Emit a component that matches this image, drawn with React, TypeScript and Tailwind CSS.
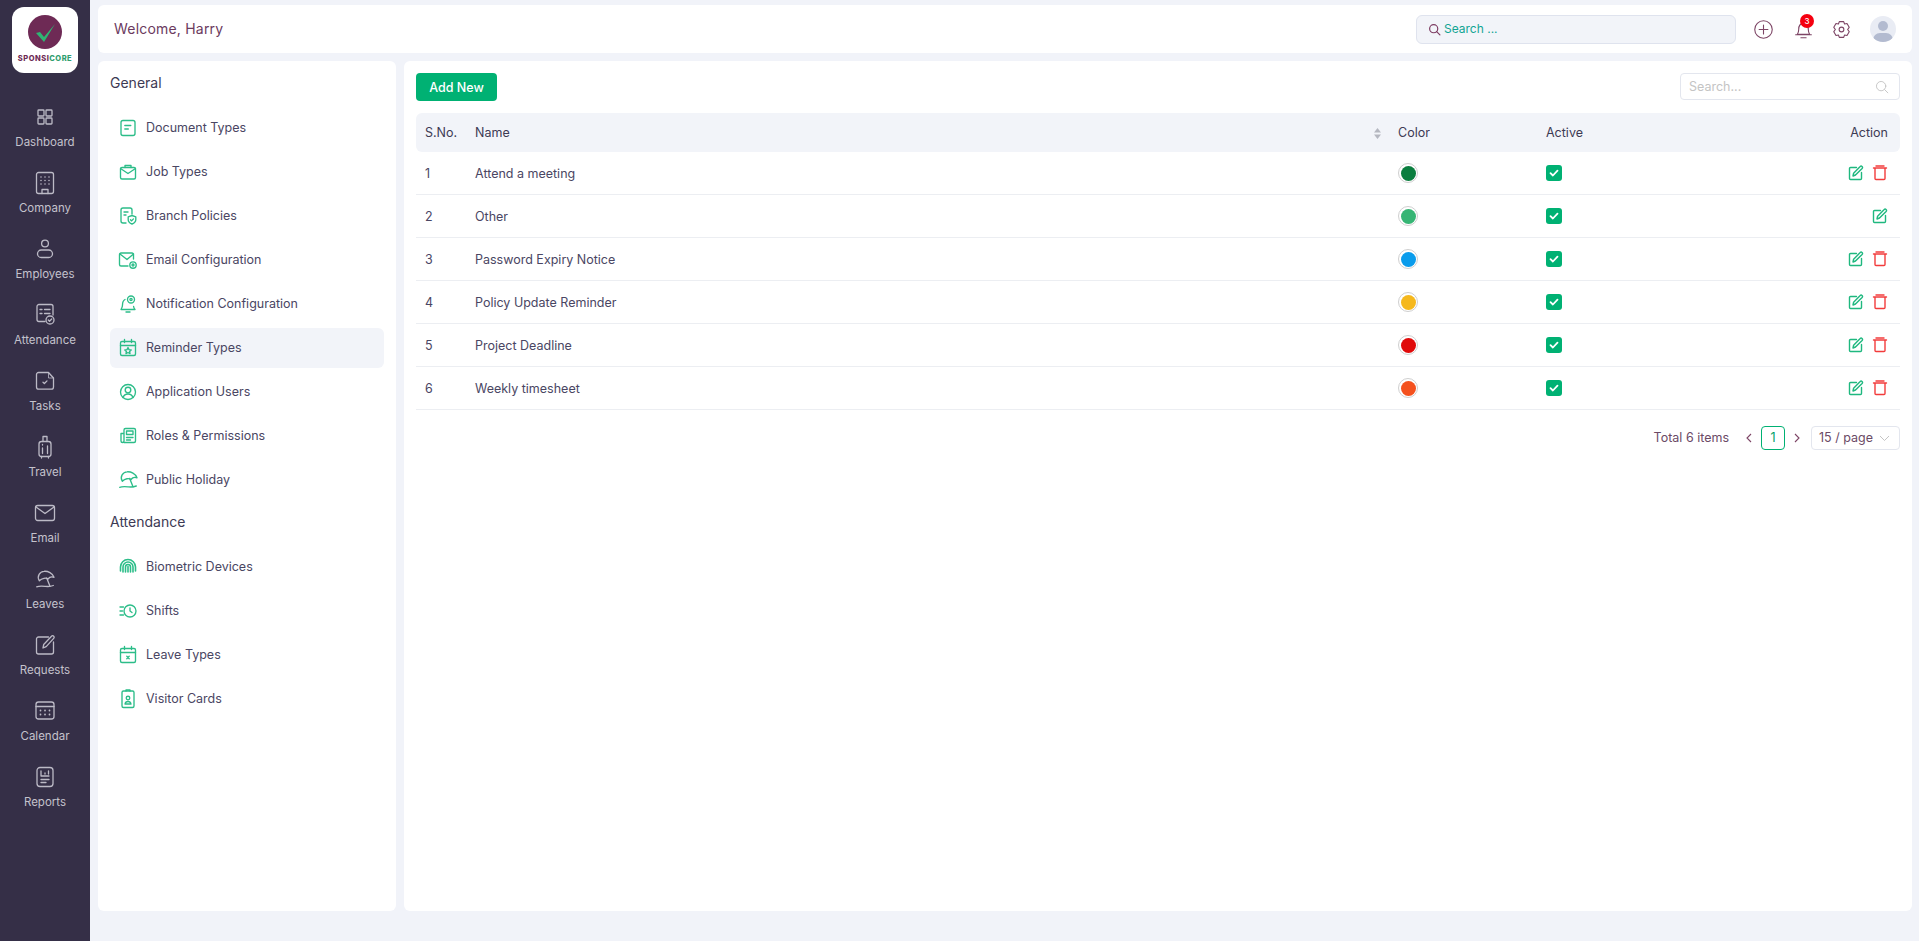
import React from 'react'

type IconProps = { children: React.ReactNode; className?: string; size?: number; box?: number; sw?: number }

const Icon = ({ children, className, size = 24, box = 24, sw = 1.3 }: IconProps) => (
  <svg width={size} height={size} viewBox={`0 0 ${box} ${box}`} fill="none" stroke="currentColor" strokeWidth={sw} strokeLinecap="round" strokeLinejoin="round" className={className}>
    {children}
  </svg>
)

const umbrella = (
  <>
    <path d="M6.3 13.7C3.500 9 7 4.500 11 4.300c4-.3 8.500 1.700 10 6-2.500-.8-4.500-.3-6 1.700-2-1.500-6-1-8.700 1.700Z" />
    <path d="M13.700 11l3.300 8.300" />
    <path d="M3.700 19.800c3.300-1.300 8.300-.3 11.300-.3 2 0 4-.5 5.300-1" />
  </>
)

const navItems: { label: string; icon: React.ReactNode }[] = [
  { label: 'Dashboard', icon: <><rect x="5" y="5" width="6" height="6" rx="0.8" /><rect x="13" y="5" width="6" height="6" rx="0.8" /><rect x="5" y="13" width="6" height="6" rx="0.8" /><rect x="13" y="13" width="6" height="6" rx="0.8" /></> },
  { label: 'Company', icon: <><rect x="3.500" y="1.500" width="17" height="21" rx="2" /><path d="M9 22.500v-4h6v4" /><path d="M8 6h.01M12 6h.01M16 6h.01M8 9.500h.01M12 9.500h.01M16 9.500h.01M8 13h.01M12 13h.01M16 13h.01" strokeWidth="1.600" /></> },
  { label: 'Employees', icon: <><circle cx="12" cy="6.500" r="3.400" /><rect x="4.500" y="13" width="15" height="7.500" rx="3.750" /></> },
  { label: 'Attendance', icon: <><path d="M12 18.500H6a2 2 0 0 1-2-2V3.500a2 2 0 0 1 2-2h12a2 2 0 0 1 2 2V12" /><path d="M7 6.500h2M11.500 6.500H17M7 10.500h2M11.500 10.500H17" /><circle cx="17" cy="17" r="4" /><path d="M15.300 17l1.200 1.200 2.200-2.200" /></> },
  { label: 'Tasks', icon: <><path d="M5.500 3.500h10l5 5.500v9a2.200 2.200 0 0 1-2.200 2.200H5.700A2.200 2.200 0 0 1 3.500 18V5.500a2 2 0 0 1 2-2Z" /><path d="M15.500 3.500V9h5" strokeWidth="0.800" /><path d="M10 13.200l1.400 1.300 2.600-2.600" /></> },
  { label: 'Travel', icon: <><rect x="6" y="6.500" width="12" height="15" rx="2.500" /><path d="M10 6.500V1.500h4v5M8.500 21.500v1.500M15.500 21.500v1.500" /><path d="M9.500 13v5.500M14.500 11v7.500M9.500 9.500v.5" /></> },
  { label: 'Email', icon: <><rect x="2.500" y="4.500" width="19" height="15" rx="2.200" /><path d="M3 6l9 6.500L21 6" /></> },
  { label: 'Leaves', icon: umbrella },
  { label: 'Requests', icon: <><path d="M15.500 4H5.500a2 2 0 0 0-2 2v13a2 2 0 0 0 2 2h13a2 2 0 0 0 2-2V9" /><path d="M10 15l.7-3.500L18.500 3.200a1.200 1.200 0 0 1 2.200 2.200l-7.500 8.200Z" /></> },
  { label: 'Calendar', icon: <><rect x="3" y="3" width="18" height="17" rx="2.500" /><path d="M3 7.500h18" /><path d="M7.500 11.500h.01M12 11.500h.01M16.500 11.500h.01M7.500 15.500h.01M12 15.500h.01M16.500 15.500h.01" strokeWidth="1.800" /></> },
  { label: 'Reports', icon: <><path d="M7 2.500h10a3 3 0 0 1 3 3v13a3 3 0 0 1-3 3H7a3 3 0 0 1-3-3v-13a3 3 0 0 1 3-3Z" /><path d="M8 6v5h8M12 8v1M15.500 6v3M8 14.500h8M8 17.500h5" /></> },
]

const generalItems: { label: string; icon: React.ReactNode }[] = [
  { label: 'Document Types', icon: <><rect x="3" y="2.500" width="14" height="15" rx="2" /><path d="M6.800 7.500h6M6.800 11h3.500" /></> },
  { label: 'Job Types', icon: <><rect x="2.500" y="5.500" width="15" height="11.500" rx="1.500" /><path d="M7 5.500V3.500h6v2M2.500 6.500l7.500 5 7.500-5" /></> },
  { label: 'Branch Policies', icon: <><path d="M8 17H5a2 2 0 0 1-2-2V4a2 2 0 0 1 2-2h7a2 2 0 0 1 2 2v4" /><path d="M6 6h4M6 9h2" /><path d="M14 9.500l3.800 1.300v3c0 2-1.600 3.400-3.800 4.200-2.200-.8-3.800-2.200-3.800-4.200v-3Z" /><path d="M12.500 13.800l1.100 1.100 1.900-2" /></> },
  { label: 'Email Configuration', icon: <><path d="M10 16H3a1.500 1.500 0 0 1-1.500-1.500v-10A1.500 1.500 0 0 1 3 3h11a1.500 1.500 0 0 1 1.500 1.500V9" /><path d="M2 4l7 5.500L15.500 4" /><circle cx="15" cy="15" r="3.200" /><circle cx="15" cy="15" r="1" /></> },
  { label: 'Notification Configuration', icon: <><path d="M7 5.500C5 6.500 4.500 8.500 4.500 11c0 2-.5 3-1.500 4.500h14c-.8-1-1.200-1.800-1.400-3" /><path d="M8 18h4" /><circle cx="13" cy="5.500" r="3.500" /><circle cx="13" cy="5.500" r="1.100" /></> },
  { label: 'Reminder Types', icon: <><rect x="2.500" y="3.500" width="15" height="14" rx="1.500" /><path d="M2.500 7.500h15M6.500 1.500v3M13.500 1.500v3" /><path d="M10 9.500l1 2.100 2.200.3-1.600 1.500.4 2.200-2-1.100-2 1.100.4-2.200-1.600-1.500 2.200-.3Z" /></> },
  { label: 'Application Users', icon: <><circle cx="10" cy="10" r="7.500" /><circle cx="10" cy="8" r="2.800" /><path d="M5 15.500c.8-2.200 2.600-3.500 5-3.500s4.200 1.300 5 3.500" /></> },
  { label: 'Roles & Permissions', icon: <><path d="M6 16.500h10a1.500 1.500 0 0 0 1.500-1.500V4A1.500 1.500 0 0 0 16 2.500H7.500A1.500 1.500 0 0 0 6 4v11a1.500 1.500 0 0 1-3 0V7.500h3" /><rect x="8.500" y="5" width="6.500" height="3.500" /><path d="M8.500 11.500h6.500M8.500 14h4" /></> },
  { label: 'Public Holiday', icon: <g transform="translate(-2 -2.500) scale(1)">{umbrella}</g> },
]

const attendanceItems: { label: string; icon: React.ReactNode }[] = [
  { label: 'Biometric Devices', icon: <><path d="M2.500 14V10a7.500 7.500 0 0 1 15 0v4" strokeWidth="1.600" /><path d="M5 15V10a5 5 0 0 1 10 0v5" strokeWidth="1.600" /><path d="M7.500 15V10a2.500 2.500 0 0 1 5 0v5M10 9.500V15" strokeWidth="1.600" /></> },
  { label: 'Shifts', icon: <><circle cx="12" cy="10" r="6" /><path d="M12 6.800V10l2 1.500M2 6h3.500M2 10h2.500M2 14h3.500" /></> },
  { label: 'Leave Types', icon: <><rect x="2.500" y="3.500" width="15" height="14" rx="1.500" /><path d="M2.500 7.500h15M6.500 1.500v3M13.500 1.500v3M8.800 11.300l2.400 2.400M11.200 11.300l-2.400 2.400" /></> },
  { label: 'Visitor Cards', icon: <><rect x="4" y="2" width="12" height="16.500" rx="1.500" /><path d="M8 2V1h4v1" /><circle cx="10" cy="9" r="1.800" /><path d="M7 15c.3-1.600 1.400-2.500 3-2.500s2.700.9 3 2.500Z" /></> },
]

const rows = [
  { no: 1, name: 'Attend a meeting', color: 'bg-[#0a7d3e]', del: true },
  { no: 2, name: 'Other', color: 'bg-[#36b574]', del: false },
  { no: 3, name: 'Password Expiry Notice', color: 'bg-[#0a9cec]', del: true },
  { no: 4, name: 'Policy Update Reminder', color: 'bg-[#f5b81d]', del: true },
  { no: 5, name: 'Project Deadline', color: 'bg-[#e00a0a]', del: true },
  { no: 6, name: 'Weekly timesheet', color: 'bg-[#f4511e]', del: true },
]

const MenuRow = ({ label, icon, active }: { label: string; icon: React.ReactNode; active?: boolean }) => (
  <div className={`flex h-[40px] items-center rounded-md pl-[8px] mb-[4px] ${active ? 'bg-[#f2f4f9]' : ''}`}>
    <span className="flex w-[20px] justify-center text-[#2cbd89]">
      <Icon size={20} box={20} sw={1.350}>{icon}</Icon>
    </span>
    <span className="ml-[8px] text-[12.5px] text-[#4a4663]">{label}</span>
  </div>
)

const App = () => {
  return (
    <div className="flex h-screen overflow-hidden bg-[#f1f3f9] font-[Inter,sans-serif]">
      {/* main nav */}
      <aside className="w-[90px] shrink-0 bg-[#352f47] pt-[7px]">
        <div className="mx-auto flex h-[66px] w-[66px] flex-col items-center rounded-xl bg-white pt-[8px]">
          <div className="flex h-[34px] w-[34px] items-center justify-center rounded-full bg-[#6e2a55]">
            <svg width="34" height="34" viewBox="0 0 34 34">
              <path d="M8 18l4-1 4 5L27 9 16 27Z" fill="#2fb573" />
            </svg>
          </div>
          <div className="mt-[5px] text-[7.500px] font-extrabold leading-[10px] tracking-[0.5px] text-[#6e2a55]">
            SPONSI<span className="text-[#2f9e6e]">CORE</span>
          </div>
        </div>
        <nav className="pt-[32px]">
          {navItems.map((item) => (
            <div key={item.label} className="flex h-[66px] flex-col items-center text-[#c4c2cc]">
              <span className="text-[#bcbac6]"><Icon>{item.icon}</Icon></span>
              <span className="mt-[5px] text-[11.500px] leading-[16px]">{item.label}</span>
            </div>
          ))}
        </nav>
      </aside>

      <div className="flex min-w-0 flex-1 flex-col px-[8px] pt-[5px] pb-[30px] pr-[7px]">
        {/* top bar */}
        <header className="flex h-[48px] shrink-0 items-center rounded-md bg-white pl-[16px]">
          <span className="mb-[2px] text-[14px] tracking-[0.2px] text-[#6b3a5e]">Welcome, Harry</span>
          <div className="ml-auto flex h-[29px] w-[320px] items-center rounded-md border border-[#dfe3ee] bg-[#f2f4f9] pl-[11px]">
            <svg width="13" height="13" viewBox="0 0 24 24" fill="none" stroke="#7d3c62" strokeWidth="2.200" strokeLinecap="round"><circle cx="10.500" cy="10.500" r="7.500" /><path d="M16 16l6 6" /></svg>
            <span className="ml-[3px] text-[12px] text-[#12a594]">Search ...</span>
          </div>
          <div className="ml-[17px] flex items-center text-[#7d4565]">
            <Icon size={21} sw={1.250}><circle cx="12" cy="12" r="10" /><path d="M12 7v10M7 12h10" /></Icon>
            <div className="relative ml-[19px] w-[21px]">
              <Icon size={21} sw={1.250}><path d="M5 17.500c1-1.500 1.500-3 1.500-5.500 0-4 2-7 5.500-7s5.500 3 5.500 7c0 2.500.5 4 1.500 5.500ZM3 18h18M9 21.500h6" /></Icon>
              <span className="absolute -top-[5px] left-[7px] flex h-[14px] w-[14px] items-center justify-center rounded-full bg-[#f5000f] text-[8px] font-medium text-white">3</span>
            </div>
            <span className="ml-[17px]">
              <Icon size={21} sw={1.250}><path d="M9.500 3h5l1 2.700 2.800-.5 2.500 4.300-1.800 2.500 1.800 2.500-2.500 4.300-2.800-.5-1 2.700h-5l-1-2.700-2.800.5L3.200 14.500 5 12 3.200 9.500l2.500-4.300 2.800.5Z" /><circle cx="12" cy="12" r="2.700" /></Icon>
            </span>
            <div className="relative ml-[18px] mr-[16px] h-[26px] w-[26px] overflow-hidden rounded-full bg-[#e9ecf4]">
              <span className="absolute left-[8px] top-[5px] h-[10px] w-[10px] rounded-full bg-[#b3bbd0]" />
              <span className="absolute left-[3px] top-[17px] h-[14px] w-[20px] rounded-full bg-[#b3bbd0]" />
            </div>
          </div>
        </header>

        <div className="mt-[8px] flex min-h-0 flex-1 gap-[8px]">
          {/* settings menu */}
          <section className="w-[298px] shrink-0 rounded-md bg-white px-[12px] pt-[13px]">
            <h2 className="text-[14px] leading-[18px] text-[#3d3a54]">General</h2>
            <div className="mt-[16px]">
              {generalItems.map((item) => (
                <MenuRow key={item.label} label={item.label} icon={item.icon} active={item.label === 'Reminder Types'} />
              ))}
            </div>
            <h2 className="mt-[13px] text-[14px] leading-[18px] text-[#3d3a54]">Attendance</h2>
            <div className="mt-[16px]">
              {attendanceItems.map((item) => (
                <MenuRow key={item.label} label={item.label} icon={item.icon} />
              ))}
            </div>
          </section>

          {/* table panel */}
          <section className="min-w-0 flex-1 rounded-md bg-white px-[12px] pt-[12px]">
            <div className="flex h-[28px] items-start justify-between">
              <button className="h-[28px] w-[81px] rounded bg-[#00b173] pt-[3px] text-[12.500px] font-medium text-white">Add New</button>
              <div className="flex h-[27px] w-[220px] items-center justify-between rounded border border-[#e3e6ee] pl-[8px] pr-[10px]">
                <span className="pt-[2px] text-[12.500px] text-[#c4c4c4]">Search...</span>
                <svg width="14" height="14" viewBox="0 0 24 24" fill="none" stroke="#c4c4c4" strokeWidth="1.600" strokeLinecap="round"><circle cx="10.500" cy="10.500" r="8" /><path d="M16.500 16.500l5.500 5.500" /></svg>
              </div>
            </div>

            <table className="mt-[12px] w-full table-fixed border-separate border-spacing-0 text-[12.500px] text-[#4a4663]">
              <colgroup>
                <col className="w-[46px]" />
                <col />
                <col className="w-[147px]" />
                <col className="w-[183px]" />
                <col className="w-[183px]" />
              </colgroup>
              <thead>
                <tr className="h-[39px] bg-[#f2f4f9] text-left text-[#3d3a54]">
                  <th className="rounded-l-md pl-[9px] pt-[1px] font-normal">S.No.</th>
                  <th className="pl-[13px] pt-[1px] font-normal">
                    <div className="flex items-center justify-between pr-[5px]">
                      <span>Name</span>
                      <svg width="9" height="13" viewBox="0 0 9 13" fill="#b5b7c0"><path d="M4.500 1l3.500 4.500H1ZM4.500 12L1 7.500h7Z" /></svg>
                    </div>
                  </th>
                  <th className="pl-[11px] pt-[1px] font-normal">Color</th>
                  <th className="pl-[12px] pt-[1px] font-normal">Active</th>
                  <th className="rounded-r-md pr-[12px] pt-[1px] text-right font-normal">Action</th>
                </tr>
              </thead>
              <tbody>
                {rows.map((r) => (
                  <tr key={r.no} className="h-[43px]">
                    <td className="border-b border-[#eceef2] pl-[9px] pt-[3px]">{r.no}</td>
                    <td className="border-b border-[#eceef2] pl-[13px] pt-[3px]">{r.name}</td>
                    <td className="border-b border-[#eceef2] pl-[11px]">
                      <div className="flex h-[20px] w-[20px] items-center justify-center rounded-full border border-[#cfcfcf]">
                        <span className={`h-[15px] w-[15px] rounded-full ${r.color}`} />
                      </div>
                    </td>
                    <td className="border-b border-[#eceef2] pl-[12px]">
                      <span className="flex h-[16px] w-[16px] items-center justify-center rounded-[3px] bg-[#00b173]">
                        <svg width="10" height="10" viewBox="0 0 10 10" fill="none" stroke="white" strokeWidth="1.800" strokeLinecap="round" strokeLinejoin="round"><path d="M1.500 5.200l2.400 2.300 4.600-4.800" /></svg>
                      </span>
                    </td>
                    <td className="border-b border-[#eceef2] pr-[12px]">
                      <div className="flex justify-end gap-[8px]">
                        <span className="text-[#1fb87f]">
                          <Icon size={16} box={16} sw={1.400}><path d="M8.500 2.500H2.500a1 1 0 0 0-1 1v10a1 1 0 0 0 1 1h10a1 1 0 0 0 1-1V7.500" /><path d="M5 11l.6-2.800 6.600-6.600a1.200 1.200 0 0 1 1.900 1.800L7.500 10Z" /></Icon>
                        </span>
                        {r.del && (
                          <span className="text-[#f23c3c]">
                            <Icon size={16} box={16} sw={1.400}><path d="M1.500 3h13M3 3v10.500a1 1 0 0 0 1 1h8a1 1 0 0 0 1-1V3M4 1h8" /></Icon>
                          </span>
                        )}
                      </div>
                    </td>
                  </tr>
                ))}
              </tbody>
            </table>

            {/* pagination */}
            <div className="mt-[16px] flex h-[24px] items-center justify-end text-[12.500px] text-[#6b4a66]">
              <span>Total 6 items</span>
              <svg className="ml-[16px]" width="8" height="10" viewBox="0 0 8 10" fill="none" stroke="#7d4565" strokeWidth="1.100"><path d="M6 1L2 5l4 4" /></svg>
              <span className="ml-[8px] flex h-[24px] w-[24px] items-center justify-center rounded border border-[#00b173] text-[#00a06a]">1</span>
              <svg className="ml-[8px]" width="8" height="10" viewBox="0 0 8 10" fill="none" stroke="#7d4565" strokeWidth="1.100"><path d="M2 1l4 4-4 4" /></svg>
              <div className="ml-[10px] flex h-[24px] w-[89px] items-center justify-between rounded border border-[#e3e6ee] pl-[7px] pr-[9px]">
                <span>15 / page</span>
                <svg width="11" height="7" viewBox="0 0 11 7" fill="none" stroke="#c4c4c4" strokeWidth="1"><path d="M1 1l4.500 4.500L10 1" /></svg>
              </div>
            </div>
          </section>
        </div>
      </div>
    </div>
  )
}

export default App
